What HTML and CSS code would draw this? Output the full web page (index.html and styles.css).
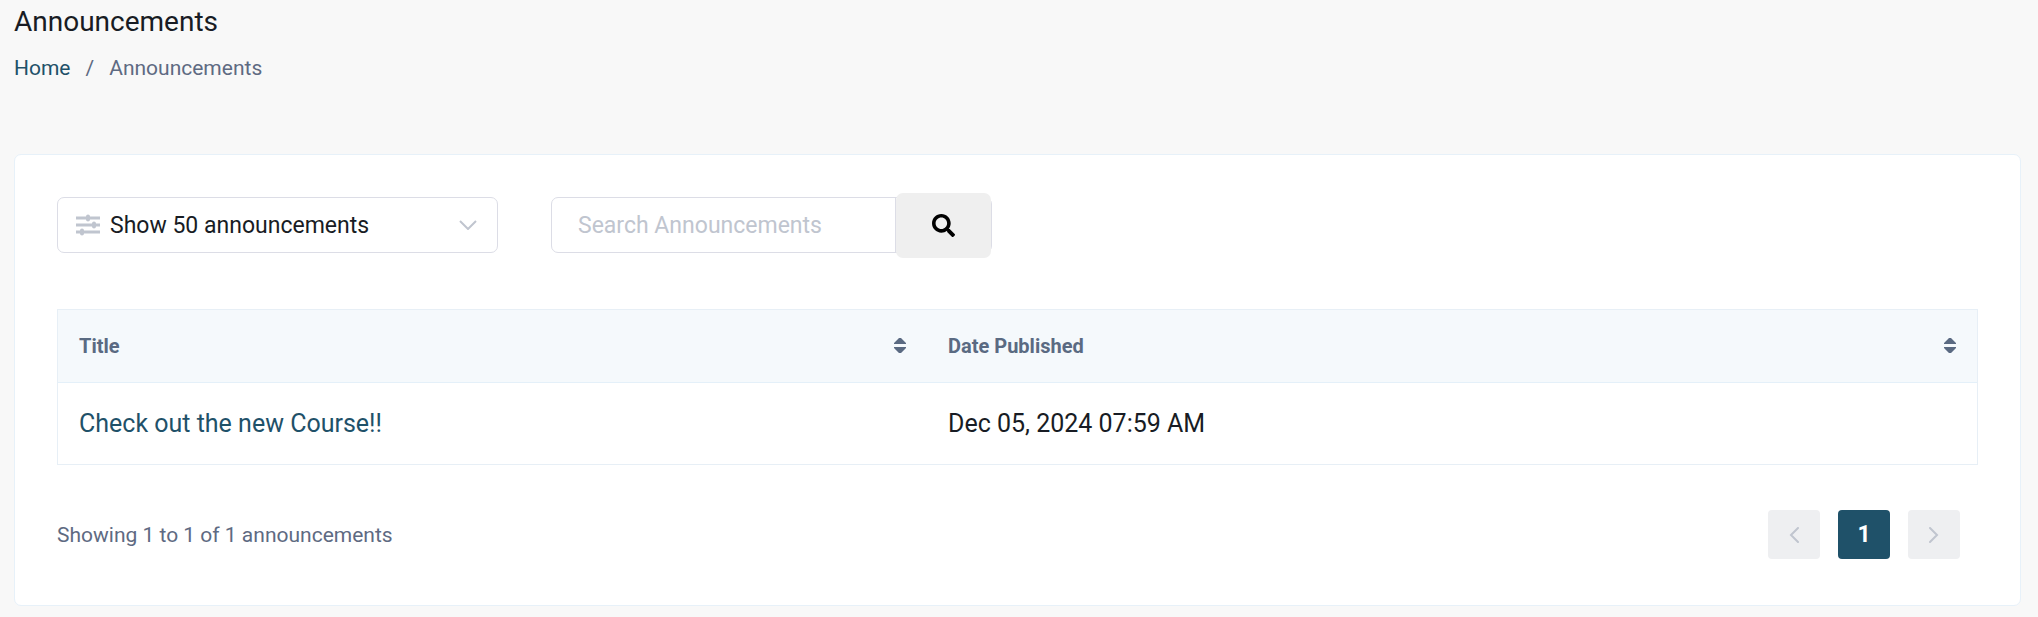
FILE: index.html
```
<!DOCTYPE html>
<html lang="en">
<head>
    <meta charset="UTF-8">
    <meta name="viewport" content="width=device-width, initial-scale=1.0">
    <title>Announcements</title>
    <link rel="stylesheet" href="styles.css">
</head>
<body>
    <header class="page-header">
        <h1>Announcements</h1>
        <nav class="breadcrumb" aria-label="Breadcrumb">
            <a href="#">Home</a>
            <span>/</span>
            <span>Announcements</span>
        </nav>
    </header>
    <main class="card">
        <form class="toolbar">
            <div class="length-box">
                <svg class="filter-icon" viewBox="0 0 24 22" aria-hidden="true">
                    <path d="M0 4h24M0 11h24M0 18h24" stroke-width="3"/>
                    <path d="M12 2.500v3M18 9.500v3M6 16.500v3" stroke-width="4" stroke-linecap="round"/>
                </svg>
                <select id="length" aria-label="Announcements per page">
                    <option>Show 50 announcements</option>
                    <option>Show 100 announcements</option>
                </select>
                <svg class="chevron" viewBox="0 0 18 10" aria-hidden="true">
                    <path d="M1 1l8 8 8-8"/>
                </svg>
            </div>
            <div class="search-box">
                <input type="text" placeholder="Search Announcements" aria-label="Search Announcements">
                <button type="button" aria-label="Search">
                    <svg viewBox="0 0 512 512" aria-hidden="true">
                        <path d="M505 442.700L405.300 343c-4.500-4.500-10.600-7-17-7H372c27.600-35.300 44-79.700 44-128C416 93.100 322.900 0 208 0S0 93.100 0 208s93.100 208 208 208c48.300 0 92.700-16.400 128-44v16.300c0 6.400 2.500 12.500 7 17l99.700 99.700c9.400 9.400 24.600 9.400 33.900 0l28.300-28.300c9.400-9.400 9.400-24.600.1-34zM208 336c-70.700 0-128-57.200-128-128 0-70.700 57.200-128 128-128 70.700 0 128 57.200 128 128 0 70.700-57.200 128-128 128z"/>
                    </svg>
                </button>
            </div>
        </form>
        <table class="list">
            <thead>
                <tr>
                    <th class="col-title">
                        <div class="th-inner">Title
                            <svg class="sort" viewBox="0 0 12 16" aria-hidden="true"><path d="M0 6V5L5 0h2l5 5v1zM0 9h12v1l-5 5H5l-5-5z"/></svg>
                        </div>
                    </th>
                    <th>
                        <div class="th-inner">Date Published
                            <svg class="sort" viewBox="0 0 12 16" aria-hidden="true"><path d="M0 6V5L5 0h2l5 5v1zM0 9h12v1l-5 5H5l-5-5z"/></svg>
                        </div>
                    </th>
                </tr>
            </thead>
            <tbody>
                <tr>
                    <td><a href="#">Check out the new Course!!</a></td>
                    <td>Dec 05, 2024 07:59 AM</td>
                </tr>
            </tbody>
        </table>
        <footer class="table-footer">
            <div class="info">Showing 1 to 1 of 1 announcements</div>
            <div class="pagination">
                <button type="button" disabled aria-label="Previous page">
                    <svg viewBox="0 0 10 16" aria-hidden="true"><path d="M9 1L2 8l7 7"/></svg>
                </button>
                <button type="button" class="active">1</button>
                <button type="button" disabled aria-label="Next page">
                    <svg viewBox="0 0 10 16" aria-hidden="true"><path d="M1 1l7 7-7 7"/></svg>
                </button>
            </div>
        </footer>
    </main>
</body>
</html>
```

FILE: styles.css
```
* {
    box-sizing: border-box;
}
body {
    margin: 0;
    padding: 4px 17px 12px 14px;
    background-color: #f8f8f8;
    color: #181c24;
    font-family: Roboto, sans-serif;
}
a {
    color: #1f5169;
    text-decoration: none;
}
h1 {
    margin: 0;
    font-size: 28px;
    font-weight: 400;
    line-height: 36px;
}
.page-header {
    height: 150px;
}
.breadcrumb {
    display: flex;
    gap: 15px;
    margin-top: 12px;
    font-size: 21px;
    line-height: 32px;
    color: #5e6a82;
}
.card {
    padding: 42px 42px 46px;
    border: 1px solid #e7f1f9;
    border-radius: 7px;
    background-color: #fff;
}
.toolbar {
    display: flex;
    flex-wrap: wrap;
    gap: 53px;
    margin-bottom: 56px;
}
.length-box,
.search-box {
    display: flex;
    align-items: center;
    width: 441px;
    height: 56px;
    border: 1px solid #dcdde6;
    border-radius: 7px;
}
.length-box {
    padding: 0 20px 0 18px;
}
.filter-icon {
    width: 24px;
    height: 22px;
    stroke: #c0c5cf;
}
.chevron {
    width: 18px;
    height: 10px;
    fill: none;
    stroke: #c0c5cf;
    stroke-width: 2;
}
.length-box select {
    flex: 1;
    min-width: 0;
    padding: 0 10px;
    border: none;
    outline: none;
    appearance: none;
    background: none;
    color: #181c24;
    font-family: inherit;
    font-size: 23px;
}
.search-box input {
    flex: 1;
    min-width: 0;
    height: 100%;
    padding: 0 26px;
    border: none;
    border-right: 1px solid #dcdde6;
    outline: none;
    background: none;
    color: #181c24;
    font-family: inherit;
    font-size: 23px;
}
.search-box input::placeholder {
    color: #c0c5cf;
}
.search-box button {
    display: flex;
    align-items: center;
    justify-content: center;
    flex-shrink: 0;
    width: 95px;
    height: 65px;
    padding: 0;
    border: none;
    border-radius: 7px;
    background-color: #efefef;
    cursor: pointer;
}
.search-box svg {
    width: 23px;
    height: 23px;
}
.list {
    width: 100%;
    border: 1px solid #e7eff6;
    border-collapse: separate;
    border-spacing: 0;
}
.list th,
.list td {
    padding: 0 21px;
    text-align: left;
}
.list th {
    height: 73px;
    border-bottom: 1px solid #e4f0f9;
    background-color: #f5f9fc;
    color: #5a6a82;
    font-size: 20px;
    font-weight: 700;
}
.list td {
    height: 81px;
    font-size: 25px;
}
.col-title {
    width: 869px;
}
.th-inner {
    display: flex;
    align-items: center;
    justify-content: space-between;
}
.sort {
    width: 12px;
    height: 16px;
    fill: #5a6a82;
}
.table-footer {
    display: flex;
    align-items: center;
    justify-content: space-between;
    margin-top: 45px;
    padding-right: 18px;
}
.info {
    font-size: 21px;
    color: #5e6a82;
}
.pagination {
    display: flex;
    gap: 18px;
}
.pagination button {
    display: flex;
    align-items: center;
    justify-content: center;
    width: 52px;
    height: 49px;
    padding: 0;
    border: none;
    border-radius: 4px;
    background-color: #eeeff1;
    font-family: inherit;
    font-size: 23px;
    font-weight: 700;
}
.pagination .active {
    background-color: #1f5169;
    color: #fff;
}
.pagination svg {
    width: 10px;
    height: 16px;
    fill: none;
    stroke: #c0c5cf;
    stroke-width: 2;
    stroke-linecap: round;
}
```
